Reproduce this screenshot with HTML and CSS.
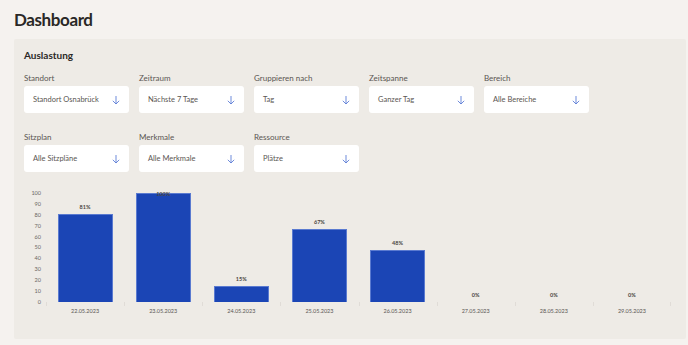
FILE: index.html
```html
<!DOCTYPE html>
<html lang="de">
<head>
  <meta charset="UTF-8">
  <title>Dashboard</title>
  <link rel="stylesheet" href="styles.css">
</head>
<body>
  <h1 class="page-title">Dashboard</h1>

  <div class="card">
    <h2 class="card-title">Auslastung</h2>

    <div class="filters">
      <div class="filter">
        <label>Standort</label>
        <div class="select"><span>Standort Osnabrück</span><svg class="arrow" viewBox="0 0 10 12"><path d="M5 1v10M1 7l4 4 4-4"/></svg></div>
      </div>
      <div class="filter">
        <label>Zeitraum</label>
        <div class="select"><span>Nächste 7 Tage</span><svg class="arrow" viewBox="0 0 10 12"><path d="M5 1v10M1 7l4 4 4-4"/></svg></div>
      </div>
      <div class="filter">
        <label>Gruppieren nach</label>
        <div class="select"><span>Tag</span><svg class="arrow" viewBox="0 0 10 12"><path d="M5 1v10M1 7l4 4 4-4"/></svg></div>
      </div>
      <div class="filter">
        <label>Zeitspanne</label>
        <div class="select"><span>Ganzer Tag</span><svg class="arrow" viewBox="0 0 10 12"><path d="M5 1v10M1 7l4 4 4-4"/></svg></div>
      </div>
      <div class="filter">
        <label>Bereich</label>
        <div class="select"><span>Alle Bereiche</span><svg class="arrow" viewBox="0 0 10 12"><path d="M5 1v10M1 7l4 4 4-4"/></svg></div>
      </div>
      <div class="filter">
        <label>Sitzplan</label>
        <div class="select"><span>Alle Sitzpläne</span><svg class="arrow" viewBox="0 0 10 12"><path d="M5 1v10M1 7l4 4 4-4"/></svg></div>
      </div>
      <div class="filter">
        <label>Merkmale</label>
        <div class="select"><span>Alle Merkmale</span><svg class="arrow" viewBox="0 0 10 12"><path d="M5 1v10M1 7l4 4 4-4"/></svg></div>
      </div>
      <div class="filter">
        <label>Ressource</label>
        <div class="select"><span>Plätze</span><svg class="arrow" viewBox="0 0 10 12"><path d="M5 1v10M1 7l4 4 4-4"/></svg></div>
      </div>
    </div>

    <div class="chart">
      <div class="y-axis">
        <span>100</span><span>90</span><span>80</span><span>70</span><span>60</span>
        <span>50</span><span>40</span><span>30</span><span>20</span><span>10</span><span>0</span>
      </div>
      <div class="plot-wrap">
        <div class="plot">
          <div class="col"><span class="value">81%</span><div class="bar" style="height:88px"></div></div>
          <div class="col"><span class="value clamped">100%</span><div class="bar" style="height:109px"></div></div>
          <div class="col"><span class="value">15%</span><div class="bar" style="height:16px"></div></div>
          <div class="col"><span class="value">67%</span><div class="bar" style="height:73px"></div></div>
          <div class="col"><span class="value">48%</span><div class="bar" style="height:52px"></div></div>
          <div class="col"><span class="value">0%</span></div>
          <div class="col"><span class="value">0%</span></div>
          <div class="col"><span class="value">0%</span></div>
        </div>
        <div class="x-axis">
          <span>22.05.2023</span><span>23.05.2023</span><span>24.05.2023</span><span>25.05.2023</span>
          <span>26.05.2023</span><span>27.05.2023</span><span>28.05.2023</span><span>29.05.2023</span>
        </div>
      </div>
    </div>
  </div>
</body>
</html>
```

FILE: styles.css
```css
body { margin: 0; padding: 0 2px 0 14px; background: #f5f2ef; font-family: Lato, "Open Sans", sans-serif; color: #2a2826; }
.page-title { margin: 0; padding-top: 9px; height: 30px; font-size: 17px; font-weight: 700; letter-spacing: -0.4px; }
.card { background: #eeebe6; padding: 10px 10px 25px; border-radius: 2px; }
.card-title { margin: 0 0 10px; font-size: 10px; font-weight: 700; line-height: 13px; }

.filters { display: grid; grid-template-columns: repeat(5, 105px); column-gap: 10px; row-gap: 18px; }
.filter label { display: block; font-size: 8px; line-height: 12px; color: #5a5652; margin-bottom: 2px; }
.select { height: 27px; background: #fff; border-radius: 3px; display: flex; align-items: center; justify-content: space-between; padding: 0 9px; box-sizing: border-box; font-size: 7.5px; color: #5a5652; }
.arrow { width: 8px; height: 10px; fill: none; stroke: #5a7bd6; stroke-width: 1.1; }

.chart { display: flex; margin-top: 14px; }
.y-axis { width: 17px; padding-right: 5px; height: 117px; display: flex; flex-direction: column; justify-content: space-between; align-items: flex-end; font-size: 5.5px; line-height: 8px; color: #6a6663; margin-top: 3px; }
.plot-wrap { width: 625px; }
.plot { display: flex; height: 116px; align-items: flex-end; }
.col { flex: 1; display: flex; flex-direction: column; align-items: center; justify-content: flex-end; height: 100%; }
.value { font-size: 5.5px; font-weight: 700; color: #4a4643; line-height: 8px; margin-bottom: 3px; }
.value.clamped { margin-bottom: -5px; position: relative; }
.bar { width: 55px; box-sizing: border-box; background: #1b45b5; border: 1px solid #5a7ad0; border-bottom: none; }
.x-axis { display: flex; }
.x-axis span { flex: 1; text-align: center; font-size: 5.5px; color: #5a5653; padding-top: 6px; background: linear-gradient(#e0dcd7, #e0dcd7) left top / 1px 4px no-repeat; }
.x-axis span:last-child { background: linear-gradient(#e0dcd7, #e0dcd7) left top / 1px 4px no-repeat, linear-gradient(#e0dcd7, #e0dcd7) right top / 1px 4px no-repeat; }
```
